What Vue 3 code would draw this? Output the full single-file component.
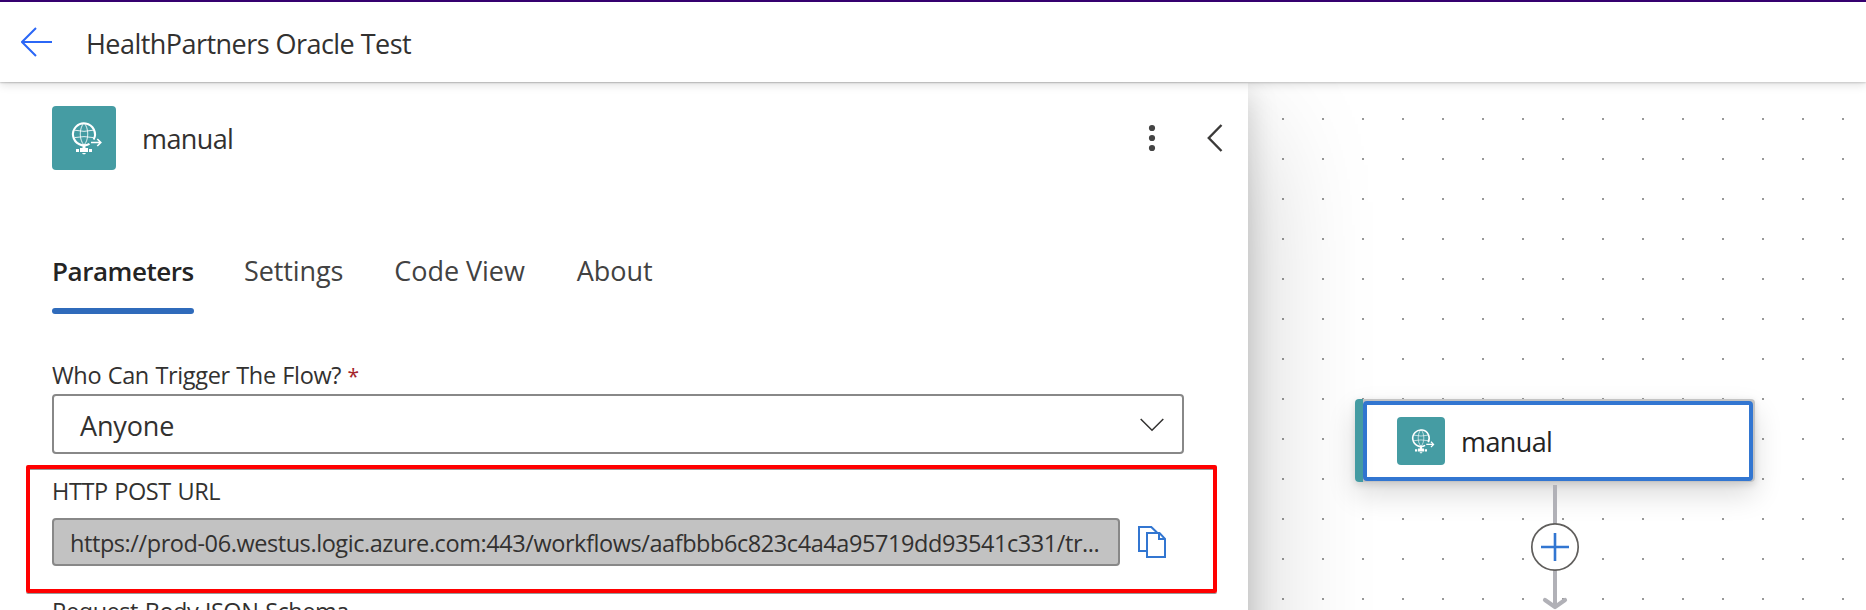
<script setup>
import { h } from 'vue'

const tabs = [
  { label: 'Parameters', active: true },
  { label: 'Settings' },
  { label: 'Code View' },
  { label: 'About' },
]

// Globe-on-a-network glyph shared by the panel header and the canvas card
const RequestIcon = () =>
  h('svg', { viewBox: '0 0 64 64', width: '100%', height: '100%', fill: 'none', stroke: '#fff' }, [
    h('path', { d: 'M41.6 33.6A11 11 0 1 0 37.5 37.8', 'stroke-width': 2.1 }),
    h('path', { d: 'M32 17C27 22 27 34 32 39M32 17C37 22 37 34 32 39M22.500 24.200Q32 26.500 41.500 24.200M22.500 31.600Q32 29.600 41.500 31.600', 'stroke-width': 1, opacity: 0.85 }),
    h('path', { d: 'M39 36.500H48.500M45.300 33L48.800 36.500L45.300 40', 'stroke-width': 1.6 }),
    h('path', { d: 'M32 39V43', 'stroke-width': 3 }),
    h('path', { d: 'M28 42H36V46H28ZM24 43H27V46H24ZM37 43H40V46H37ZM30 47H34L33 48.200H31Z', fill: '#fff', stroke: 'none' }),
  ])
</script>

<template>
  <div class="app">
    <header class="topbar">
      <svg class="back" width="32" height="30" viewBox="0 0 32 30" fill="none" stroke="#2b67f6" stroke-width="2">
        <path d="M31 15H1.500M15 1L1 15L15 29" />
      </svg>
      <h1>HealthPartners Oracle Test</h1>
    </header>

    <main class="workspace">
      <section class="panel">
        <div class="panel-head">
          <span class="tile"><RequestIcon /></span>
          <h2>manual</h2>
          <svg class="more" width="8" height="28" viewBox="0 0 8 28" fill="#444">
            <circle cx="4" cy="4" r="3.100" /><circle cx="4" cy="14" r="3.100" /><circle cx="4" cy="24" r="3.100" />
          </svg>
          <svg class="collapse" width="16" height="28" viewBox="0 0 16 28" fill="none" stroke="#3b3a39" stroke-width="2.400">
            <path d="M14.500 1L1.800 14L14.500 27" />
          </svg>
        </div>

        <nav class="tabs">
          <span v-for="t in tabs" :key="t.label" class="tab" :class="{ active: t.active }">{{ t.label }}</span>
        </nav>

        <div class="form">
          <label class="label who">Who Can Trigger The Flow? <em>*</em></label>
          <div class="select">
            <span>Anyone</span>
            <svg width="24" height="14" viewBox="0 0 24 14" fill="none" stroke="#323130" stroke-width="1.500">
              <path d="M0.700 1L12 12.300L23.300 1" />
            </svg>
          </div>

          <div class="url-field">
            <label class="label http">HTTP POST URL</label>
            <div class="url-row">
              <div class="url">https://prod-06.westus.logic.azure.com:443/workflows/aafbbb6c823c4a4a95719dd93541c331/tr...</div>
              <svg width="28" height="32" viewBox="0 0 28 32" fill="none" stroke="#3276d1" stroke-width="2">
                <path d="M8 25H1V1H13.300L19 6.500M9 7H21.500L27 12.800V31H9ZM21 7V13H27" />
              </svg>
            </div>
            <div class="highlight"></div>
          </div>

          <label class="label schema">Request Body JSON Schema</label>
        </div>
      </section>

      <section class="canvas">
        <svg class="grid" width="618" height="527">
          <defs>
            <pattern id="dots" x="34" y="35" width="40" height="40" patternUnits="userSpaceOnUse">
              <rect width="2" height="2" fill="#999" />
            </pattern>
          </defs>
          <rect width="618" height="527" fill="url(#dots)" />
        </svg>
        <div class="node">
          <div class="node-body">
            <span class="tile small"><RequestIcon /></span>
            <span class="node-title">manual</span>
          </div>
        </div>
        <svg class="edge" width="50" height="125" viewBox="0 0 50 125" fill="none">
          <path d="M25 0V120" stroke="#b1b1b7" stroke-width="4" />
          <path d="M15 115L25 122L35 115" stroke="#b1b1b7" stroke-width="4.200" stroke-linecap="round" stroke-linejoin="round" />
          <circle cx="25" cy="62" r="23.200" fill="#fff" stroke="#605e5c" stroke-width="1.700" />
          <path d="M11 62H39M25 48V76" stroke="#3276d1" stroke-width="2.600" />
        </svg>
      </section>
    </main>
  </div>
</template>

<style>
html, body { margin: 0; overflow: hidden; }
</style>

<style scoped>
.app {
  width: 1866px;
  height: 610px;
  overflow: hidden;
  display: flex;
  flex-direction: column;
  background: #fff;
  color: #323130;
  font-family: "Open Sans", "Noto Sans", sans-serif;
}
h1, h2 { margin: 0; font-size: 27px; font-weight: 400; line-height: 32px; }

.topbar {
  position: relative;
  z-index: 3;
  box-sizing: border-box;
  flex: none;
  height: 82px;
  padding-left: 21px;
  display: flex;
  align-items: center;
  border-top: 2px solid #35006f;
  background: #fff;
  box-shadow: 0 0.6px 1.800px rgba(0, 0, 0, 0.16), 0 3px 9px rgba(0, 0, 0, 0.12);
}
.topbar h1 { margin: 3px 0 0 33px; letter-spacing: -0.54px; }

.workspace { flex: 1; min-height: 0; display: flex; margin-top: 1px; }

.panel {
  position: relative;
  z-index: 2;
  box-sizing: border-box;
  width: 1248px;
  flex: none;
  height: 800px;
  padding: 23px 0 0 52px;
  background: #fff;
  box-shadow: 0 51.200px 115.200px rgba(0, 0, 0, 0.22), 0 9.600px 28.800px rgba(0, 0, 0, 0.18);
}
.panel-head { display: flex; align-items: center; height: 64px; }
.tile { flex: none; display: block; width: 64px; height: 64px; border-radius: 4px; background: #459ca3; }
.tile.small { width: 48px; height: 48px; }
.panel-head h2 { margin: 2px 0 0 26px; letter-spacing: -0.6px; }
.more { margin-left: auto; }
.collapse { margin: 0 25px 0 51px; }

.tabs { display: flex; gap: 51px; margin-top: 85px; }
.tab { font-size: 27px; line-height: 32px; padding-bottom: 21px; border-bottom: 6px solid transparent; color: #424242; letter-spacing: -0.05px; }
.tab:nth-child(2) { margin-left: -1px; letter-spacing: -0.1px; }
.tab:nth-child(4) { margin-left: 1px; }
.tab.active {
  position: relative;
  width: 142px;
  font-size: 26px;
  font-weight: 600;
  letter-spacing: -0.45px;
  color: #242424;
}
.tab.active::after { content: ""; position: absolute; left: 0; right: 0; bottom: -6px; height: 6px; border-radius: 3px; background: #2f6bbb; }

.form { margin-top: 46px; }
.label { display: block; height: 30px; font-size: 23.500px; line-height: 31px; white-space: nowrap; }
.who { letter-spacing: -0.36px; word-spacing: 0.800px; }
.who em { font-style: normal; font-size: 21px; color: #a4262c; }
.select {
  box-sizing: border-box;
  width: 1132px;
  height: 60px;
  margin-top: 4px;
  padding: 2px 18px 0 26px;
  display: flex;
  align-items: center;
  justify-content: space-between;
  border: 2px solid #888;
  border-radius: 4px;
  font-size: 27px;
  letter-spacing: -0.15px;
}
.url-field { position: relative; margin-top: 22px; }
.http { letter-spacing: -0.4px; word-spacing: 0.800px; }
.url-row { display: flex; align-items: center; gap: 18px; margin-top: 12px; }
.url {
  box-sizing: border-box;
  width: 1068px;
  height: 48px;
  padding: 2px 0 0 16px;
  border: 2px solid #888;
  border-radius: 4px;
  background: #c2c2c2;
  font-size: 23.500px;
  line-height: 43px;
  letter-spacing: -0.43px;
  white-space: nowrap;
}
.highlight {
  position: absolute;
  left: -26px;
  top: -11px;
  box-sizing: border-box;
  width: 1191px;
  height: 128px;
  border: 4px solid #f00;
  border-radius: 2px;
  box-shadow: 0 1px 0 #999, inset 0 1px 0 #999;
}
.schema { margin-top: 30px; letter-spacing: -0.48px; word-spacing: 1.200px; }

.canvas { position: relative; flex: 1; }
.grid { position: absolute; left: 0; top: 0; }
.node {
  position: absolute;
  left: 107px;
  top: 316px;
  box-sizing: border-box;
  width: 400px;
  height: 83px;
  padding: 2px 2px 2px 8px;
  border-radius: 4px;
  background: linear-gradient(90deg, #459ca3 8px, #c4c4c4 8px);
  box-shadow: 0 12.800px 28.800px rgba(0, 0, 0, 0.14), 0 2.400px 7.200px rgba(0, 0, 0, 0.11);
}
.node-body {
  box-sizing: border-box;
  height: 80px;
  padding-left: 30px;
  display: flex;
  align-items: center;
  border: 4px solid #3276d1;
  border-radius: 4px;
  background: #fff;
}
.node-title { margin: 1px 0 0 16px; font-size: 27px; line-height: 32px; letter-spacing: -0.6px; color: #242424; }
.edge { position: absolute; left: 282px; top: 402px; }
</style>
